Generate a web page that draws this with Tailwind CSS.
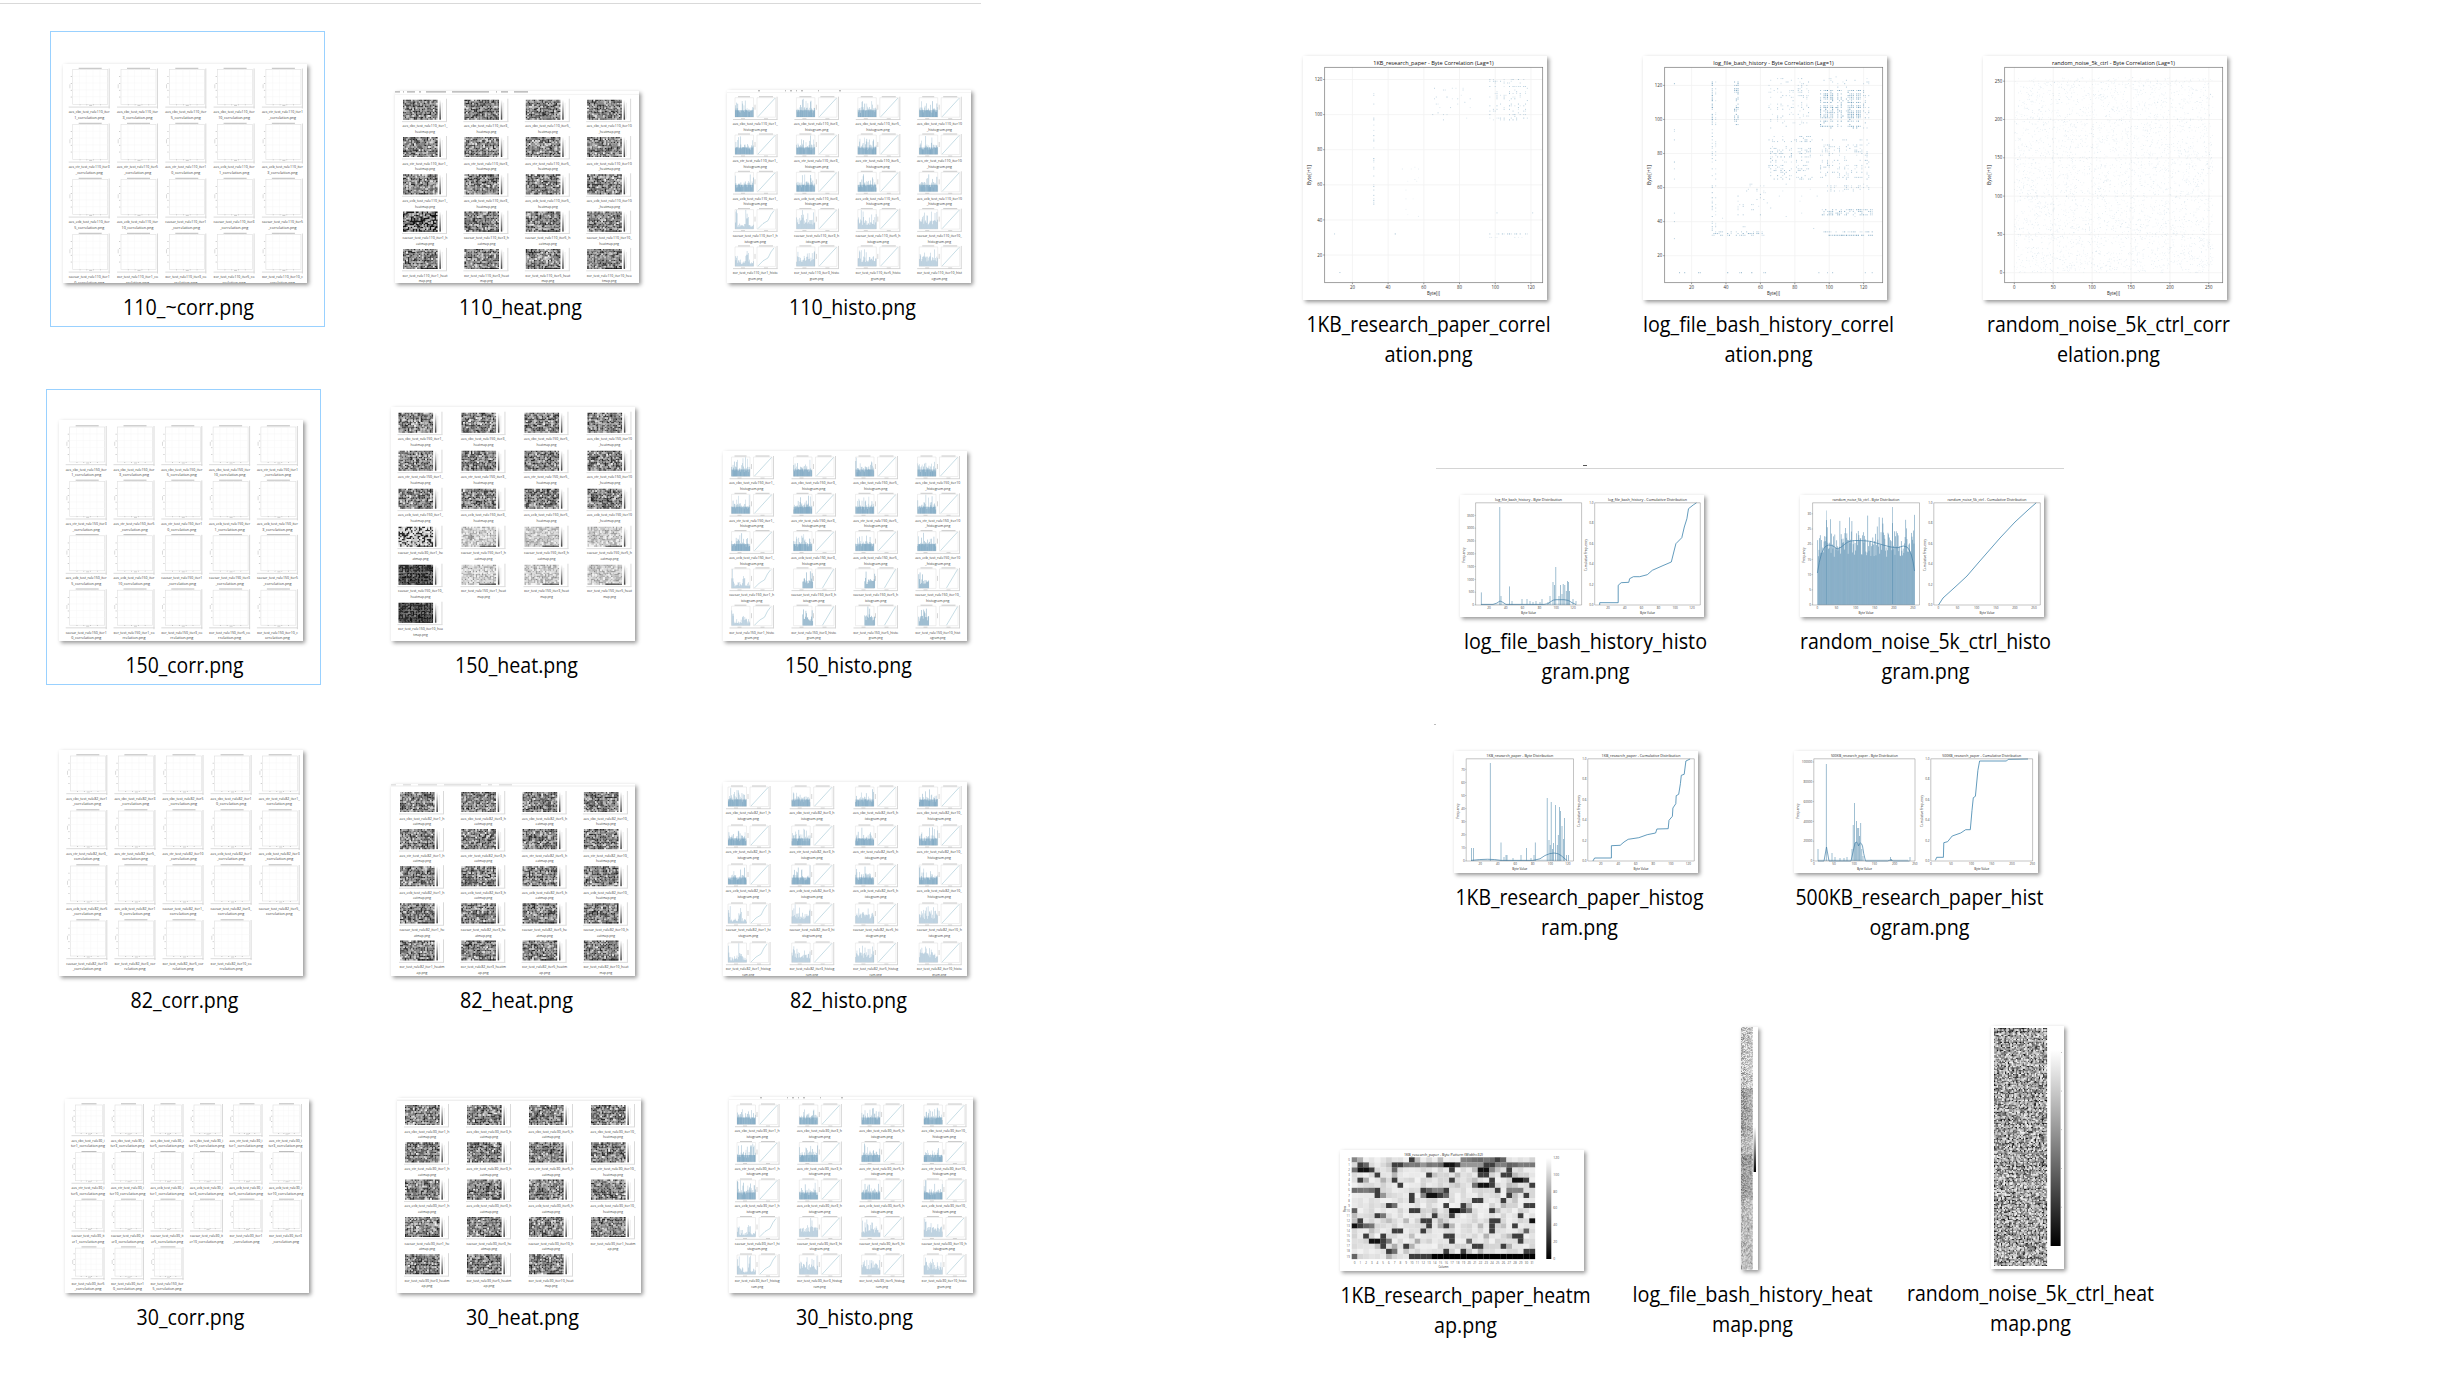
<!DOCTYPE html>
<html lang="en">
<head>
<meta charset="utf-8">
<title>Plot files</title>
<script src="https://cdn.jsdelivr.net/npm/@tailwindcss/browser@4"></script>
</head>
<body class="bg-white text-black font-['Open_Sans','Noto_Sans',sans-serif] w-[2457px] h-[1381px] overflow-hidden">
<main class="flex h-full pt-[3px]">
  <section class="w-[981px] shrink-0 border-t border-[#d9d9d9]">
    <div class="flex gap-[57px] pt-[27px] pl-[50px]">
      <figure data-sel data-kind="corr" data-rule="110" data-h="219" data-label="110_~corr.png:131"></figure>
      <figure data-kind="heat" data-rule="110" data-h="192" data-label="110_heat.png:123"></figure>
      <figure data-kind="histo" data-rule="110" data-h="193" data-label="110_histo.png:127"></figure>
    </div>
    <div class="flex gap-[57px] pt-[62px] pl-[46px]">
      <figure data-sel data-kind="corr" data-rule="150" data-h="221" data-label="150_corr.png:118"></figure>
      <figure data-kind="heat" data-rule="150" data-h="234" data-label="150_heat.png:123"></figure>
      <figure data-kind="histo" data-rule="150" data-h="190" data-label="150_histo.png:127"></figure>
    </div>
    <div class="flex gap-[57px] pt-[39px] pl-[46px]">
      <figure data-kind="corr" data-rule="82" data-h="226" data-label="82_corr.png:108"></figure>
      <figure data-kind="heat" data-rule="82" data-h="192" data-label="82_heat.png:113"></figure>
      <figure data-kind="histo" data-rule="82" data-h="194" data-label="82_histo.png:117"></figure>
    </div>
    <div class="flex gap-[57px] pt-[21px] pl-[52px]">
      <figure data-kind="corr" data-rule="30" data-h="194" data-label="30_corr.png:108"></figure>
      <figure data-kind="heat" data-rule="30" data-h="195" data-label="30_heat.png:113"></figure>
      <figure data-kind="histo" data-rule="30" data-h="196" data-label="30_histo.png:117"></figure>
    </div>
  </section>
  <section class="flex flex-col">
    <div class="flex gap-[65px] h-[366px] items-end pl-[309px]">
      <figure data-kind="scatter" data-id="paper" data-h="244" data-label="1KB_research_paper_correl:244|ation.png:88"></figure>
      <figure data-kind="scatter" data-id="log" data-h="244" data-label="log_file_bash_history_correl:251|ation.png:88"></figure>
      <figure data-kind="scatter" data-id="noise" data-h="244" data-label="random_noise_5k_ctrl_corr:243|elation.png:103"></figure>
    </div>
    <div class="ml-[455px] mt-[96px] w-[628px] h-1 border-b border-[#d4d4d4] pl-[147px]"><div class="w-1 h-px bg-[#555]"></div></div>
    <div class="flex gap-[65px] h-[217px] items-end pl-[466px]">
      <figure data-kind="dist" data-id="log" data-h="122" data-label="log_file_bash_history_histo:243|gram.png:88"></figure>
      <figure data-kind="dist" data-id="noise" data-h="122" data-label="random_noise_5k_ctrl_histo:251|gram.png:88"></figure>
    </div>
    <div class="ml-[453px] mt-[38px] w-0.5 h-px bg-[#bbb]"></div>
    <div class="flex gap-[65px] h-[217px] items-end pl-[460px]">
      <figure data-kind="dist" data-id="paper" data-h="122" data-label="1KB_research_paper_histog:248|ram.png:77"></figure>
      <figure data-kind="dist" data-id="big" data-h="122" data-label="500KB_research_paper_hist:248|ogram.png:100"></figure>
    </div>
    <div class="flex h-[398px] items-end pl-[346px]">
      <figure data-kind="map" data-h="121" data-label="1KB_research_paper_heatm:250|ap.png:63"></figure>
      <figure class="ml-3 mb-px" data-kind="strip" data-id="log" data-w="17" data-h="243" data-label="log_file_bash_history_heat:240|map.png:81"></figure>
      <figure class="ml-[3px] mb-0.5" data-kind="strip" data-id="noise" data-w="73" data-h="243" data-label="random_noise_5k_ctrl_heat:247|map.png:81"></figure>
    </div>
  </section>
</main>
<script>
let seed = 7;
const rnd = () => { seed = (seed * 1664525 + 1013904223) >>> 0; return seed / 4294967296; };
const n = v => +v.toFixed(2);
const BLUE = '#4682a8';
const rect = (x, y, w, h, f, o = 1) => `<rect x="${n(x)}" y="${n(y)}" width="${n(w)}" height="${n(h)}" fill="${f}" opacity="${o}"/>`;
const line = (d, s, w = .5, o = 1) => `<path d="${d}" fill="none" stroke="${s}" stroke-width="${w}" opacity="${o}"/>`;
const text = (x, y, s, size, len, fill = '#555', anchor = 'middle', extra = '') =>
  `<text x="${n(x)}" y="${n(y)}" font-size="${size}" fill="${fill}" text-anchor="${anchor}" ${len ? `textLength="${n(len)}" lengthAdjust="spacingAndGlyphs"` : ''} ${extra}>${s}</text>`;

/* grayscale noise: cells gathered into one path per shade */
function noise(x, y, w, h, cw, ch, shade) {
  const groups = {};
  const cols = Math.round(w / cw), rows = Math.round(h / ch);
  cw = w / cols; ch = h / rows;
  for (let r = 0; r < rows; r++) for (let c = 0; c < cols; c++) {
    const g = Math.max(0, Math.min(255, Math.round(shade(r / rows, c / cols) / 20) * 20));
    (groups[g] ||= []).push(`M${n(x + c * cw)} ${n(y + r * ch)}h${n(cw + .1)}v${n(ch + .1)}h-${n(cw + .1)}z`);
  }
  return Object.entries(groups).map(([g, p]) => `<path fill="rgb(${g},${g},${g})" d="${p.join('')}"/>`).join('');
}

function names(rule, kind) {
  const out = [];
  for (const a of ['aes_cbc', 'aes_ctr', 'aes_ecb', 'caesar', 'xor'])
    for (const i of [1, 3, 5, 10]) out.push(`${a}_test_rule${rule}_iter${i}_`);
  if (rule == '150' && kind == 'heat') out.splice(12, 0, 'caesar_test_rule30_iter1_');
  if (rule == '82' && kind == 'corr') out.splice(16, 1);
  if (rule == '30' && kind == 'heat') out.splice(14, 1);
  if (rule == '30' && kind == 'corr') out.push('xor_test_rule150_iter5_');
  return out.map(s => s + { corr: 'correlation', heat: 'heatmap', histo: 'histogram' }[kind] + '.png');
}

const grids = {
  corr: { 110: [5.7, 48.3, 3.5, 55, 5], 150: [6.7, 47.8, 5, 54.4, 5], 82: [7.3, 48.1, 4, 55, 5], 30: [6.5, 39.5, 4, 47.7, 6] },
  heat: { 110: [8, 61.4, 8.7, 37.3, 4], 150: [7.5, 63, 5.7, 38, 4], 82: [9, 61.3, 8, 37.1, 4], 30: [8, 62, 7, 37.3, 4] },
  histo: { 110: [6, 61.4, 6.7, 37.3, 4], 150: [6.5, 62, 5, 37.3, 4], 82: [3, 63.7, 4, 39, 4], 30: [6, 62.3, 7, 37.5, 4] }
};

function caption(x, y, w, s, cut) {
  const a = s.slice(0, cut), b = s.slice(cut);
  return text(x, y, a, 4, w, '#3a3a3a') + text(x, y + 5.6, b, 4, w / cut * b.length * 1.08, '#3a3a3a');
}

function sheet(kind, rule, H) {
  const [x0, px, y0, py, cols] = grids[kind][rule];
  let o = '';
  names(rule, kind).forEach((name, i) => {
    const x = x0 + px * (i % cols), y = y0 + py * Math.floor(i / cols);
    if (kind == 'corr') {
      const small = cols == 6, w = small ? 33 : 41, h = small ? 33 : 40;
      o += rect(x + w - 1, y + 1, 1, h, '#cfcfcf', .8) + rect(x, y + h - 1, w, 1.2, '#d4d4d4', .7);
      o += `<rect x="${n(x + 4)}" y="${n(y + 2)}" width="${w - 6}" height="${h - 5}" fill="none" stroke="#dfdfdf" stroke-width=".6"/>`;
      o += line(`M${n(x + 10)} ${n(y + .8)}h${w - 18}`, '#b5b5b5', .9);
      o += line(`M${n(x + 1.2)} ${n(y + h * .42)}v4`, '#ccc', .7) + line(`M${n(x + w / 2)} ${n(y + h - 2)}h3`, '#bbb', .7);
      for (let k = 1; k < 5; k++) {
        o += rect(x + 2, y + 2 + k * (h - 6) / 5, 1.3, .7, '#bbb') + rect(x + 4 + k * (w - 7) / 5, y + h - 3, .9, .7, '#aaa');
        o += line(`M${n(x + 4 + k * (w - 7) / 5)} ${n(y + 2)}v${h - 5}M${n(x + 4)} ${n(y + 2 + k * (h - 6) / 5)}h${w - 6}`, '#f6f6f6', .5);
      }
      o += caption(x + w / 2, y + h + 5.6, w, name, small ? 21 : name.startsWith('aes_ctr') ? 26 : 25);
    } else if (kind == 'heat') {
      const h = 20;
      let shade = () => 30 + 220 * rnd() * (.5 + rnd() * .5);
      if (rule == '150' && i == 12) shade = () => rnd() < .38 ? 30 : 240 - rnd() * 70;
      else if (rule == '150' && (i == 16 || i == 20)) shade = () => 25 + rnd() * rnd() * 110;
      else if (rule == '150' && i > 12) shade = r => r > .93 ? 190 : 145 + rnd() * 95;
      else if (rule == '110' && i == 12) shade = () => rnd() < .45 ? 25 : 60 + rnd() * 150;
      o += rect(x + 43, y - 1, .9, h + 3, '#d5d5d5') + rect(x - 1, y + h + 1.5, 45, .9, '#dadada');
      o += noise(x, y, 34.5, h, 1.57, 1.55, shade);
      if (i > 11) o += rect(x + 18, y + h - 1, 16.5, 1, '#111', .8);
      o += rect(x + 36.4, y, 1.5, h, 'url(#bar)', .75) + line(`M${n(x + 39.3)} ${n(y + 3)}v${h - 4}`, '#ddd', .5);
      o += caption(x + 22, y + h + 7.6, 45, name, 27);
    } else {
      o += rect(x + 43.6, y, .9, 23, '#d3d3d3') + rect(x, y + 22.3, 44.5, .9, '#d3d3d3');
      o += `<path d="M${n(x + 2)} ${n(y + 1)}h18.5v19.5h-18.5zM${n(x + 24)} ${n(y + 1)}h18.5v19.5h-18.5z" fill="none" stroke="#dedede" stroke-width=".5"/>`;
      o += line(`M${n(x + 5)} ${n(y)}h12M${n(x + 26)} ${n(y)}h14`, '#aaa', .6);
      o += line(`M${n(x + 8)} ${n(y + 22)}h4M${n(x + 31)} ${n(y + 22)}h4M${n(x + 22)} ${n(y + 8)}v5`, '#bbb', .6);
      const weak = i >= 12, late = rule == '150' && i > 12 && i != 16;
      const from = late ? [9, 9, 9, 1][(i - 12) % 4] : 0, to = late ? from + 10 : 18.3;
      for (let k = from; k < to; k += .62) {
        const peak = weak && !late && i % 4 == 0 ? (Math.abs(k - 12) < 1.5 || k < 2 ? 1.2 : .4) : 1;
        const t = Math.min(19, (4 + rnd() * 6 + (rnd() < .35 ? rnd() * 10 : 0)) * peak);
        o += rect(x + 2 + k, y + 20.3 - t, .62, t, BLUE, late ? .6 : weak ? .38 : n(.3 + rnd() * .25));
      }
      if (!weak) o += rect(x + 2, y + 13.5, 18.3, 6.8, BLUE, .35);
      const odd = weak && i % 4 == 0;
      o += line(odd ? `M${n(x + 25)} ${n(y + 20)}l5 -5l5 -3l3 -6l3 -4` : `M${n(x + (late ? 31 : 25))} ${n(y + 20)}L${n(x + 42)} ${n(y + 1.5)}`, '#6fa8bd', .6, .65);
      o += caption(x + 22.2, y + 28.3, 45, name, name.startsWith('xor') ? 28 : 27);
    }
  });
  if (rule == '110' && kind == 'heat') o += line('M0 3.4H244', '#eee', .7) + line('M0 .9h5m3 0h1m3 0h8m4 0h2m5 0h20m6 0h37m7 0h1m4 0h7m6 0h14', '#777', 1.2, .6);
  if (kind == 'heat' && rule == '82') o += line('M0 2H244', '#e5e5e5', .7) + line('M0 .8h5m7 0h8m7 0h19m7 0h37m7 0h4m7 0h13', '#999', .8, .5);
  if (kind == 'histo' && (rule == '110' || rule == '30')) o += line('M31 .8h2m25 0h1m4 0h2m4 0h1m4 0h2m15 0h1m20 0h2', '#777', 1, .7) + line('M0 2.5H244', '#eee', .6);
  if (kind == 'heat' && rule == '30') o += line('M0 2.2H244', '#e2e2e2', .8);
  return o;
}

function scatter(id) {
  const L = 21.7, R = 239.7, T = 11.3, B = 226.7;
  const cfg = { paper: ['1KB_research_paper', 49.4, 35.7, 199, 35.1], log: ['log_file_bash_history', 48.6, 34.4, 199.7, 34.06], noise: ['random_noise_5k_ctrl', 31.3, 38.9, 216.7, 38.3] }[id];
  const [name, tx, px, ty, py] = cfg, isN = id == 'noise';
  let o = '';
  for (let k = 0; k < 6; k++) {
    const v = isN ? k * 50 : 20 + 20 * k, x = tx + px * k, y = ty - py * k;
    o += line(`M${n(x)} ${T}V${B}M${L} ${n(y)}H${R}`, '#f1f1f1', .8) + line(`M${n(x)} ${B}v1.5M${L} ${n(y)}h-1.5`, '#555', .6);
    o += text(x, B + 6, v, 4.4, 0, '#333') + text(L - 2.5, y + 1.6, v, 4.4, 0, '#333', 'end');
  }
  const X = v => isN ? tx + v / 50 * px : tx + (v - 20) / 20 * px, Y = v => isN ? ty - v / 50 * py : ty - (v - 20) / 20 * py;
  const dot = (a, b, p, s = .95) => rect(X(a) - s / 2, Y(b) - s / 2, s, s, BLUE, p);
  if (isN) for (let k = 0; k < 3600; k++) o += rect(X(rnd() * 255), Y(rnd() * 255), .65, .65, BLUE, n(.1 + rnd() * .2));
  const block = (x1, x2, y1, y2, den, p) => {
    const cx = {}, cy = {};
    for (let a = x1; a <= x2; a++) {
      cx[a] = x2 - x1 > 3 && rnd() < .35 ? .15 : 1;
      for (let b = y1; b <= y2; b++) { cy[b] ??= y2 - y1 > 3 && rnd() < .3 ? .2 : 1; if (rnd() < den * cx[a] * cy[b]) o += dot(a, b, n(p * (.5 + rnd() * .8))); }
    }
  };
  if (id == 'log') {
    block(95, 118, 95, 117, .95, .75); block(119, 123, 95, 117, .4, .5); block(32, 32, 97, 122, 1, .85); block(45, 47, 97, 122, .75, .7);
    block(34, 34, 97, 122, .6, .35); block(95, 123, 118, 125, .25, .4); block(65, 90, 65, 90, .42, .5); block(95, 123, 65, 88, .38, .45); block(65, 88, 95, 125, .3, .4);
    block(32, 32, 33, 96, .6, .5); block(34, 34, 33, 90, .4, .35); block(95, 125, 44, 47, .7, .6); block(97, 125, 32, 32, 1, .9); block(97, 125, 34, 34, .8, .6);
    block(32, 62, 32, 34, .5, .6); block(95, 123, 58, 61, .35, .4); block(44, 62, 44, 62, .13, .4); block(10, 126, 10, 10, .15, .6);
    block(10, 10, 30, 125, .14, .5); block(32, 126, 36, 62, .02, .35);
  } else if (id == 'paper') {
    block(97, 118, 97, 120, .4, .4); block(32, 32, 48, 115, .4, .45); block(65, 86, 97, 115, .1, .3); block(97, 118, 32, 32, .7, .5); block(48, 58, 40, 70, .06, .15); block(97, 118, 30, 30, .3, .2);
    o += dot(10, 32, .4) + dot(13, 10, .5) + dot(44, 32, .6) + dot(101, 44, .4) + dot(121, 44, .4) + dot(73, 110, .5) + dot(68, 101, .4);
  }
  o += `<rect x="${L}" y="${T}" width="${R - L}" height="${B - T}" fill="none" stroke="#777" stroke-width=".7"/>`;
  o += text(130.5, 8.6, name + ' - Byte Correlation (Lag=1)', 5.2, id == 'noise' ? 123 : 120.5, '#111');
  o += text(130.5, 238.6, 'Byte[i]', 4.5, 13, '#222') + text(0, 0, 'Byte[i+1]', 4.5, 20, '#222', 'middle', 'transform="translate(8 119) rotate(-90)"');
  return o;
}

function dist(id) {
  const B = 110, T = 7.8;
  const c = {
    log: { n: 'log_file_bash_history', a: 15.6, b: 121.6, c: 134.7, d: 240.3, y: ['0', '500', '1000', '1500', '2000', '2500', '3000', '3500'], s: 12.8, x: [20, 40, 60, 80, 100, 120], x0: 29, xs: 16.8, cx: 148, cs: 16.8,
      bars: [[21.3, 12.6], [39.8, 98], [41, 9], [49.5, 18.6], [52, 4], [62, 6], [67, 6], [70, 4], [73, 3], [76, 4], [80, 3], [82, 6], [88, 3], [90, 9], [93, 23], [94.5, 20], [95.8, 38], [99, 9], [100.5, 20], [102, 11], [103.2, 21], [104.8, 20], [106.3, 14], [107.5, 24], [108.6, 23], [109.5, 14], [113, 6], [116, 4]],
      kde: 'M21 109.5h12q4 -1 7 -3.5q3 1 6 3.5h38q4 0 7 -3q2 -1.8 5 -1.8h8q5 0 8 3l4 1.8',
      cum: 'M139.7 110V107.7H158.200V90.300L161.200 87.700L168.800 87.300L169.600 83.700L173.400 81.700H179.700L187.300 79.700L192.300 75.300L202 71L211.300 67L213.800 57L215.900 48.700L221.800 42.700L224.300 32L226.900 23.700L228.500 13.700L233.600 9.700L236.500 7.800' },
    noise: { n: 'random_noise_5k_ctrl', a: 12.6, b: 119.5, c: 133.8, d: 240.3, y: [0, 5, 10, 15, 20, 25, 30], s: 15.2, x: [0, 50, 100, 150, 200, 250], x0: 17.4, xs: 19.1, cx: 138.5, cs: 19.1,
      kde: 'M17.4 78Q21 54 26 51t11 3q4 -1 8 -5t14 -3.5t12 1t14 4t15 1.5t7 0q5 4 7.5 24',
      cum: 'M138.500 110L143 103L157 90.300L167 81L179 67L200 43L215 27L228 15L236.200 7.800' },
    paper: { n: '1KB_research_paper', a: 12.2, b: 119.5, c: 133.8, d: 240.3, y: [0, 10, 20, 30, 40, 50, 60, 70], s: 13.1, x: [20, 40, 60, 80, 100, 120], x0: 26.3, xs: 17.5, cx: 146.8, cs: 17.5,
      bars: [[17.6, 13], [19.5, 13], [36.3, 98], [47, 18.5], [50, 4], [52, 6], [53, 6], [59, 3], [67, 6], [72.5, 13], [77, 3], [80, 6], [81.3, 18.5], [93.2, 63], [95, 21], [96.2, 16], [97.2, 59], [98.5, 12], [99.5, 18], [101.4, 56], [103.3, 16], [104.3, 26], [105.4, 54], [106.5, 50], [108, 35], [109.4, 22], [110.5, 43], [112.5, 6], [114.5, 6]],
      kde: 'M17 109.5q18 -2.5 30 0h32q8 -1 12 -5q10 -5 16 0l6 5',
      cum: 'M138.900 110L140.600 107H157.400V94.700L166.200 94.300L170 91L174.200 88.300L184.800 86.700L193.200 83.700L201.600 82L202.900 78L214.200 77.700L215 69.300L218.400 65.300L218.900 57L221.800 52.700L222.200 44.700L224.700 43.300L226.400 32.700L227.300 24.300L230.200 23.300L231.900 10L236.100 8' },
    big: { n: '500KB_research_paper', a: 19.8, b: 121, c: 136.8, d: 238.6, y: ['0', '20000', '40000', '60000', '80000', '100000'], s: 19.8, x: [0, 50, 100, 150, 200, 250], x0: 19.8, xs: 20.2, cx: 136.8, cs: 20.3,
      bars: [[24, 12], [32.3, 97], [38, 8], [41, 4], [46, 3], [50, 3], [53, 4], [58, 12], [59.2, 36], [60.4, 58], [61.5, 18], [62.6, 40], [63.7, 33], [64.7, 33], [65.5, 25], [66.7, 38], [67.8, 12], [69, 5], [96.5, 4], [97.5, 2], [116, 4]],
      kde: 'M24 110h6l2.5 -14l2.5 14h22q2 -9 4 -18q2 -3 3.5 3q2 -6 4 0q1 8 3 15h22l3 -1l3 1h16',
      cum: 'M141.400 109.300L142.700 106.300H149.400L149.800 91.700L153.600 90.700L158.200 85L166.700 82L171.700 78.700H176.300L178 59.300L179.300 46.700L181.400 45.300L183.900 19.300L185.600 10H212.500L214.200 8.300L234 8' }
  }[id];
  let o = '';
  if (id == 'noise') {
    for (let k = 0; k < 154; k++) { const h = 48 + rnd() * 25 + (rnd() < .35 ? rnd() * 24 : 0); o += rect(17.4 + k * .633, B - h, .66, h, BLUE, .74); }
    o += rect(26, 15.5, .5, 94, BLUE, .6) + rect(92, 12, .7, 97, BLUE, .6);
  } else c.bars.forEach(([x, h]) => o += rect(x - .4, B - h, .8, h, BLUE, .65));
  if (c.bars) o += rect(c.bars[0][0], 108.6, 90, 1.4, BLUE, .25);
  o += line(c.kde, BLUE, .9, .8) + line(c.cum, '#3f84ad', .9, .9);
  o += line(`M${c.a} ${T}H${c.b}V${B}H${c.a}zM${c.c} ${T}H${c.d}V${B}H${c.c}z`, '#888', .5);
  c.y.forEach((v, k) => { o += text(c.a - 1.5, B - k * c.s + 1.2, v, 3.1, 0, '#444', 'end') + line(`M${c.a} ${n(B - k * c.s)}h-1`, '#666', .4); });
  c.x.forEach((v, k) => { o += text(c.x0 + c.xs * k, B + 4.2, v, 3.1, 0, '#444') + text(c.cx + c.cs * k, B + 4.2, v, 3.1, 0, '#444'); });
  for (let k = 0; k < 6; k++) o += text(c.c - 1.2, B - k * (B - T) / 5 + 1.2, (k / 5).toFixed(1), 3.1, 0, '#444', 'end');
  o += text((c.a + c.b) / 2, 6, c.n + ' - Byte Distribution', 3.8, 67, '#222') + text((c.c + c.d) / 2, 6, c.n + ' - Cumulative Distribution', 3.8, 79, '#222');
  o += text((c.a + c.b) / 2, 118.6, 'Byte Value', 3.5, 15, '#222') + text((c.c + c.d) / 2, 118.6, 'Byte Value', 3.5, 15, '#222');
  o += text(0, 0, 'Frequency', 3.4, 15, '#333', 'middle', 'transform="translate(5 60) rotate(-90)"') + text(0, 0, 'Cumulative Frequency', 3.4, 32, '#333', 'middle', `transform="translate(${c.c - 7.5} 60) rotate(-90)"`);
  return o;
}

function heatmap() {
  const rows = [
    'm.........d........mmmmmmdm.....', '.dm....ddmmmlmmmbbdllllddmmmmmmm', 'mbbd...m.........d....bbm..d....', '....d........d........dd..dd....',
    '.d.....d.........d......d...bbd.', '........d............mbbd......d', 'mmmmd.......dmmmd........d.mmm..', '....dl....d.mbbdm..........d..d.',
    '..........d..........dd...d.....', '......dm........d..d..........dd', 'm.........dd.....bbdm...d.......', '....dm........d..d...........d..',
    '.d..........dd..........dd.....b', 'bdmm.........d..d.......d...d...', '.......dd...d...........d.....m.', '..d..d..........dd..........dd..',
    '...bbdm..........d..m........d..', '.....d...d...........dd...d.....', '......dm........d..d..........dd', 'm.........ddddbbbbbbbbbbbbbbbbbb'];
  const cw = 183.3 / 32, ch = 101.7 / 20;
  let o = '';
  rows.forEach((r, j) => [...r].forEach((c, i) => {
    let g = { m: 95 + rnd() * 40, d: 62, b: 18, l: 150 }[c] ?? (rnd() < .1 ? 170 + rnd() * 30 : 210 + rnd() * 32);
    if (j == 19 && i > 13) g = 0;
    g = Math.round(g);
    o += rect(11.7 + i * cw, 7.3 + j * ch, cw + .15, ch + .15, `rgb(${g},${g},${g})`);
  }));
  for (let i = 0; i < 32; i++) o += text(11.7 + (i + .5) * cw, 113.6, i, 3);
  for (let j = 0; j < 20; j++) o += text(9.8, 8.4 + (j + .5) * ch, j, 2.8, 0, '#555', 'end');
  o += rect(206.3, 8, 5, 101, 'url(#bar)');
  for (let k = 0; k < 7; k++) o += text(213.3, 109.8 - k * 16.8, k * 20, 3.4, 0, '#555', 'start');
  o += text(103.4, 5.9, '1KB_research_paper - Byte Pattern (Width=32)', 3.7, 79, '#222') + text(103.4, 118, 'Column', 3.4, 10, '#222');
  return o + text(0, 0, 'Row', 3.4, 6, '#222', 'middle', 'transform="translate(5.5 59) rotate(-90)"');
}

function strip(id) {
  if (id == 'log') return noise(0, 0, 11.5, 242.5, 1, 1, r => 120 + rnd() * 105 - (r > .25 && r < .42 ? 15 : 0) - (r > .52 && r < .7 ? 35 : 0) - (rnd() < .2 ? 30 : 0) + (r < .25 ? 20 : 0)) + rect(12.6, 100, 2.4, 45, 'url(#bar)');
  let o = noise(3, 2, 53, 238, 1.35, 1.35, () => 20 + rnd() * 225) + rect(59.6, 24, 10, 196, 'url(#bar)');
  for (let k = 0; k < 5; k++) o += rect(70, 26 + k * 38.7, 1, .7, '#aaa');
  return o;
}

for (const f of document.querySelectorAll('figure')) {
  const d = f.dataset, w = +(d.w || 244), h = +d.h;
  const draw = { scatter: () => scatter(d.id), dist: () => dist(d.id), map: heatmap, strip: () => strip(d.id) }[d.kind] || (() => sheet(d.kind, d.rule, h));
  const lines = d.label.split('|');
  f.className += ' w-[275px] shrink-0 flex flex-col justify-end ' + (lines.length == 1 ? 'h-[296px] pb-[5px] ' : '') + ('sel' in d ? 'outline outline-1 -outline-offset-1 outline-[#99d1ff]' : '');
  f.innerHTML = `<div class="w-[244px] ml-[13px] flex justify-center"><svg class="block bg-white shadow-[2px_2px_4px_rgba(0,0,0,0.42)] font-['Open_Sans',sans-serif]" width="${w}" height="${h}" viewBox="0 0 ${w} ${h}"><defs><linearGradient id="bar" x2="0" y2="1"><stop stop-color="#fff"/><stop offset="1" stop-color="#000"/></linearGradient></defs>${draw()}</svg></div>
    <figcaption class="mt-[9px] flex flex-col items-center">${lines.map(l => {
      const [s, len] = l.split(':');
      return `<svg class="block overflow-visible" width="275" height="30">${text(138.5, 23, s, 21.5, +len, '#000')}</svg>`;
    }).join('')}</figcaption>`;
}
</script>
</body>
</html>
